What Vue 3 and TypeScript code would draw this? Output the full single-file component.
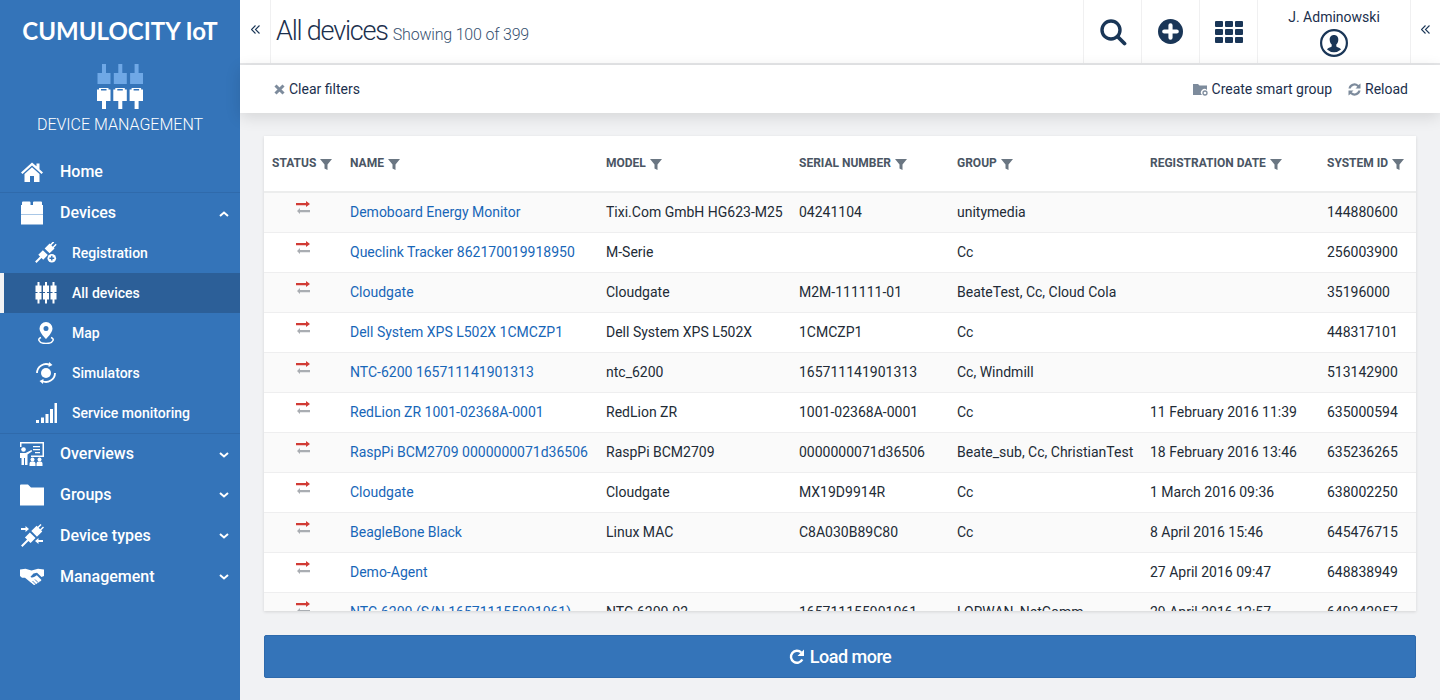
<script setup lang="ts">
interface Device {
  name: string;
  model: string;
  serial: string;
  group: string;
  date: string;
  id: string;
}

interface SubItem {
  label: string;
  icon: string;
  active?: boolean;
}

const subItems: SubItem[] = [
  { label: 'Registration', icon: 'plug' },
  { label: 'All devices', icon: 'devices', active: true },
  { label: 'Map', icon: 'pin' },
  { label: 'Simulators', icon: 'sim' },
  { label: 'Service monitoring', icon: 'bars' },
];

const bottomItems = [
  { label: 'Overviews', icon: 'overview' },
  { label: 'Groups', icon: 'folder' },
  { label: 'Device types', icon: 'types' },
  { label: 'Management', icon: 'hands' },
];

const columns = ['Status', 'Name', 'Model', 'Serial number', 'Group', 'Registration date', 'System ID'];

const devices: Device[] = [
  { name: 'Demoboard Energy Monitor', model: 'Tixi.Com GmbH HG623-M25', serial: '04241104', group: 'unitymedia', date: '', id: '144880600' },
  { name: 'Queclink Tracker 862170019918950', model: 'M-Serie', serial: '', group: 'Cc', date: '', id: '256003900' },
  { name: 'Cloudgate', model: 'Cloudgate', serial: 'M2M-111111-01', group: 'BeateTest, Cc, Cloud Cola', date: '', id: '35196000' },
  { name: 'Dell System XPS L502X 1CMCZP1', model: 'Dell System XPS L502X', serial: '1CMCZP1', group: 'Cc', date: '', id: '448317101' },
  { name: 'NTC-6200 165711141901313', model: 'ntc_6200', serial: '165711141901313', group: 'Cc, Windmill', date: '', id: '513142900' },
  { name: 'RedLion ZR 1001-02368A-0001', model: 'RedLion ZR', serial: '1001-02368A-0001', group: 'Cc', date: '11 February 2016 11:39', id: '635000594' },
  { name: 'RaspPi BCM2709 0000000071d36506', model: 'RaspPi BCM2709', serial: '0000000071d36506', group: 'Beate_sub, Cc, ChristianTest', date: '18 February 2016 13:46', id: '635236265' },
  { name: 'Cloudgate', model: 'Cloudgate', serial: 'MX19D9914R', group: 'Cc', date: '1 March 2016 09:36', id: '638002250' },
  { name: 'BeagleBone Black', model: 'Linux MAC', serial: 'C8A030B89C80', group: 'Cc', date: '8 April 2016 15:46', id: '645476715' },
  { name: 'Demo-Agent', model: '', serial: '', group: '', date: '27 April 2016 09:47', id: '648838949' },
  { name: 'NTC-6200 (S/N 165711155901061)', model: 'NTC-6200-02', serial: '165711155901061', group: 'LORWAN, NetComm', date: '29 April 2016 12:57', id: '649242957' },
];
</script>

<template>
  <div class="app">
    <aside class="sidebar">
      <div class="brand">CUMULOCITY IoT</div>
      <svg class="app-logo" width="46" height="45" viewBox="0 0 46 45">
        <g v-for="x in [0, 16.3, 32.6]" :key="x" :transform="`translate(${x} 0)`">
          <path d="M5 0h4v9h4.500v11H.5V9H5z" fill="#6fa8e6" />
          <path d="M2 24h9.500v1.500h2V37H9v8H5v-8H0V25.500h2z" fill="#fff" />
          <rect x="4" y="25" width="5.500" height="1.500" fill="#3474b9" />
        </g>
      </svg>
      <div class="app-name">DEVICE MANAGEMENT</div>

      <nav class="nav">
        <a class="nav-top">
          <svg class="nav-icon" viewBox="0 0 24 24" width="24" height="24">
            <path d="M12 2.500 1 12.500l1.500 1.600L12 5.600l9.500 8.500 1.500-1.600-3.500-3.200V3.500h-3v2.800z" fill="#fff" />
            <path d="M12 7.300 4.500 14v8H10v-6h4v6h5.500v-8z" fill="#fff" />
          </svg>
          <span>Home</span>
        </a>
        <a class="nav-top line">
          <svg class="nav-icon" viewBox="0 0 24 24" width="24" height="24">
            <path d="M2 4V1.500a1 1 0 0 1 1-1h6.500a1 1 0 0 1 1 1V4h2.500V1.500a1 1 0 0 1 1-1H21a1 1 0 0 1 1 1V4h1v19.500H1V4z" fill="#fff" />
            <rect x="1" y="13" width="22" height="1" fill="#a9c7e6" />
          </svg>
          <span>Devices</span>
          <svg class="chev" width="10" height="6" viewBox="0 0 10 6"><path d="M1 5l4-3.500L9 5" fill="none" stroke="#fff" stroke-width="2" /></svg>
        </a>
        <a v-for="item in subItems" :key="item.label" class="nav-sub" :class="{ active: item.active }">
          <svg class="sub-icon" viewBox="0 0 22 22" width="22" height="22">
            <template v-if="item.icon === 'plug'">
              <g transform="rotate(45 10 11)" fill="#fff">
                <path d="M7.500 -3h1.500v4h2v-4h1.500v4h1v7H6.500V1h1z" />
                <path d="M6.500 10.500h7v6.500H11v7H9v-7H6.500z" />
              </g>
              <circle cx="16.800" cy="16.200" r="5" fill="#3474b9" />
              <circle cx="16.800" cy="16.200" r="4.300" fill="#fff" />
              <path d="M16.800 13.800v4.800M14.400 16.200h4.800" stroke="#3474b9" stroke-width="1.400" />
            </template>
            <template v-else-if="item.icon === 'devices'">
              <g v-for="x in [0.5, 8, 15.5]" :key="x" fill="#fff">
                <rect :x="x + 2" y="0" width="2" height="21.500" />
                <rect :x="x" y="3.500" width="6" height="6.500" />
                <rect :x="x" y="11" width="6" height="6.500" />
              </g>
            </template>
            <template v-else-if="item.icon === 'pin'">
              <path d="M11 0a6.500 6.500 0 0 0-6.500 6.500C4.500 11 11 17 11 17s6.500-6 6.500-10.500A6.500 6.500 0 0 0 11 0zm0 9a2.500 2.500 0 1 1 0-5 2.500 2.500 0 0 1 0 5z" fill="#fff" />
              <path d="M6 15.500c-2 .7-2.500 2-2 3 .8 2 3.500 3 7 3s6.200-1 7-3c.5-1 0-2.300-2-3" fill="none" stroke="#fff" stroke-width="1.500" />
            </template>
            <template v-else-if="item.icon === 'sim'">
              <circle cx="11" cy="11" r="5" fill="#fff" />
              <path d="M2 11a9 9 0 0 1 13-8M20 11a9 9 0 0 1-13 8" fill="none" stroke="#fff" stroke-width="1.800" />
              <path d="M14 0l3.500 3-4 2zM8 22l-3.500-3 4-2z" fill="#fff" />
            </template>
            <template v-else>
              <rect x="1" y="18" width="3" height="3" fill="#fff" />
              <rect x="6" y="15.500" width="3" height="5.500" fill="#fff" />
              <rect x="10.500" y="12" width="3" height="9" fill="#fff" />
              <rect x="15" y="7" width="3" height="14" fill="#fff" />
              <rect x="19.500" y="1" width="2.500" height="20" fill="#fff" />
            </template>
          </svg>
          <span>{{ item.label }}</span>
        </a>
        <a v-for="(item, i) in bottomItems" :key="item.label" class="nav-top" :class="{ line: i === 0 }">
          <svg class="nav-icon" viewBox="0 0 24 24" width="24" height="24">
            <template v-if="item.icon === 'overview'">
              <path d="M0 0h24v15H11v-1.500h11.500V1.500h-21V5H0z" fill="#fff" />
              <circle cx="3.500" cy="7.500" r="2.300" fill="#fff" />
              <path d="M0 11h5.500l6-3 .7 1.300L7.500 12.500V23H5v-7H4v7H1.500v-7H0z" fill="#fff" />
              <path d="M13 4h7v1.300h-7zM13 7h7v1.300h-7zM15 10h5v1.300h-5z" fill="#fff" />
              <circle cx="12.500" cy="17.500" r="2" fill="#fff" />
              <circle cx="19.500" cy="17.500" r="2" fill="#fff" />
              <path d="M9.500 24v-2.500a2 2 0 0 1 2-2h2a2 2 0 0 1 2 2V24zM16.500 24v-2.500a2 2 0 0 1 2-2h2a2 2 0 0 1 2 2V24z" fill="#fff" />
            </template>
            <template v-else-if="item.icon === 'folder'">
              <path d="M0 2.500a1 1 0 0 1 1-1h7l3 3h13v18H0z" fill="#fff" />
            </template>
            <template v-else-if="item.icon === 'types'">
              <g transform="rotate(45 12 12)" fill="#fff">
                <path d="M9.500 -2.500h1.500v4h2v-4h1.500v4h1.500v7.500H8v-7.500h1.500z" />
                <path d="M8 11h8v7h-3v8.500h-2V18H8z" />
              </g>
              <path d="M1 4h4.500V2l3.500 3-3.500 3V6H1zM23 18h-4.500v2L15 17l3.500-3v2H23z" fill="#fff" />
            </template>
            <template v-else>
              <path d="M0 4.500l5.500-.7 6 1.700 6.500-1.700 6 .7v6.500l-2.500 1-4.500-4.300-3.500.8-3 3.200c1 1.200 2.500 1 4 0l2.300-1.500 4.700 4.800-1 1.200-1 .2-.5 1-1.500.3-.5 1-1.500.2-.7 1-1.300-.2L5 12.800H2L0 11z" fill="#fff" />
              <path d="M15 14.500l3 3M12.500 16l3 3M10.500 18l2 2" stroke="#3474b9" stroke-width=".9" />
            </template>
          </svg>
          <span>{{ item.label }}</span>
          <svg class="chev" width="10" height="6" viewBox="0 0 10 6"><path d="M1 1l4 3.500L9 1" fill="none" stroke="#fff" stroke-width="2" /></svg>
        </a>
      </nav>
    </aside>

    <main class="main">
      <header class="topbar">
        <button class="collapse" aria-label="Collapse menu">
          <svg width="9" height="9" viewBox="0 0 9 9"><path d="M4.500 .5l-4 4 4 4M8.500 .5l-4 4 4 4" fill="none" stroke="#1a3657" stroke-width="1.100" /></svg>
        </button>
        <div class="title">
          <h1>All devices</h1>
          <small>Showing 100 of 399</small>
        </div>
        <div class="top-btn">
          <svg width="28" height="28" viewBox="0 0 28 28"><circle cx="12" cy="12" r="9" fill="none" stroke="#1a3657" stroke-width="3.400" /><path d="M18.500 18.500l7 7" stroke="#1a3657" stroke-width="3.800" stroke-linecap="round" /></svg>
        </div>
        <div class="top-btn">
          <svg width="25" height="25" viewBox="0 0 24 24"><circle cx="12" cy="12" r="12" fill="#1a3657" /><path d="M12 6v12M6 12h12" stroke="#fff" stroke-width="4" stroke-linecap="round" /></svg>
        </div>
        <div class="top-btn">
          <div class="apps"><span v-for="n in 9" :key="n"></span></div>
        </div>
        <div class="user">
          <span>J. Adminowski</span>
          <svg width="28" height="28" viewBox="0 0 28 28">
            <circle cx="14" cy="14" r="12.900" fill="none" stroke="#1a3657" stroke-width="2.200" />
            <path d="M14 6c-3 0-4.500 2.300-4.300 5 .1 2 1 3.500 2 4.500v2c-1.500 1-4 1.300-4.700 3a10.500 10.500 0 0 0 14 0c-.7-1.700-3.200-2-4.700-3v-2c1-1 1.900-2.500 2-4.500.2-2.700-1.300-5-4.300-5z" fill="#1a3657" />
          </svg>
        </div>
        <button class="collapse right" aria-label="Collapse panel">
          <svg width="9" height="9" viewBox="0 0 9 9"><path d="M4.500 .5l-4 4 4 4M8.500 .5l-4 4 4 4" fill="none" stroke="#1a3657" stroke-width="1.100" /></svg>
        </button>
      </header>

      <div class="actions">
        <a class="act left">
          <svg width="11" height="11" viewBox="0 0 11 11"><path d="M1.500 1.500l8 8M9.500 1.500l-8 8" stroke="#7d8b9c" stroke-width="3" /></svg>
          Clear filters
        </a>
        <a class="act">
          <svg width="15" height="13" viewBox="0 0 15 13"><path d="M0 1h5l1.500 1.500H14V7a3.500 3.500 0 0 0-5 5H0z" fill="#7d8b9c" /><circle cx="12" cy="10" r="2" fill="none" stroke="#7d8b9c" stroke-width="1.300" /></svg>
          Create smart group
        </a>
        <a class="act">
          <svg width="13" height="13" viewBox="0 0 13 13"><path d="M.5 5.500A6 6 0 0 1 10.500 2L12.500.5v5h-5l1.800-1.800A4 4 0 0 0 2.700 5.500zM12.500 7.500A6 6 0 0 1 2.500 11L.5 12.500v-5h5L3.700 9.300a4 4 0 0 0 6.600-1.800z" fill="#7d8b9c" /></svg>
          Reload
        </a>
      </div>

      <section class="content">
        <div class="card">
          <table>
            <colgroup>
              <col style="width: 78px" />
              <col style="width: 256px" />
              <col style="width: 193px" />
              <col style="width: 158px" />
              <col style="width: 193px" />
              <col style="width: 177px" />
              <col style="width: 97px" />
            </colgroup>
            <thead>
              <tr>
                <th v-for="c in columns" :key="c">
                  {{ c }}
                  <svg class="filter" width="12" height="12" viewBox="0 0 12 12"><path d="M0 1h12L7.500 6.500V12l-3-1.500v-4z" fill="#6a7682" /></svg>
                </th>
              </tr>
            </thead>
            <tbody>
              <tr v-for="(d, i) in devices" :key="i">
                <td class="status">
                  <svg class="status-icon" width="14" height="14" viewBox="0 0 14 14">
                    <path d="M0 2h10V0l4 3-4 3V4.300H0z" fill="#d13b35" />
                    <path d="M14 9H4V7l-3 3 3 3v-1.800h10z" fill="#a9adb2" />
                  </svg>
                </td>
                <td><a class="link">{{ d.name }}</a></td>
                <td>{{ d.model }}</td>
                <td>{{ d.serial }}</td>
                <td>{{ d.group }}</td>
                <td>{{ d.date }}</td>
                <td>{{ d.id }}</td>
              </tr>
            </tbody>
          </table>
        </div>
        <button class="load">
          <svg width="16" height="16" viewBox="0 0 16 16"><path d="M13.300 10.500A6 6 0 1 1 12.200 3.500" fill="none" stroke="#fff" stroke-width="2.400" /><path d="M15 0.500V7H8.500z" fill="#fff" /></svg>
          Load more
        </button>
      </section>
    </main>
  </div>
</template>

<style scoped>
.app {
  display: flex;
  height: 700px;
  overflow: hidden;
  font-family: Roboto, "Liberation Sans", sans-serif;
  font-size: 14px;
  color: #1b2a3f;
}

.sidebar {
  width: 240px;
  flex: none;
  background: #3474b9;
  color: #fff;
  display: flex;
  flex-direction: column;
  align-items: center;
}

.brand {
  margin-top: 15px;
  font-family: Lato, sans-serif;
  font-weight: 700;
  font-size: 24px;
  line-height: 31px;
}

.app-logo {
  margin-top: 18px;
}

.app-name {
  margin-top: 4px;
  font-size: 16px;
  line-height: 24px;
  font-weight: 300;
}

.nav {
  align-self: stretch;
  margin-top: 14px;
  display: flex;
  flex-direction: column;
}

.nav-top {
  height: 41px;
  box-sizing: border-box;
  display: flex;
  align-items: center;
  padding-left: 20px;
  font-size: 16px;
  font-weight: 500;
  position: relative;
}

.nav-top span {
  margin-left: 16px;
}

.nav-top.line {
  border-top: 1px solid #2f6aab;
  padding-bottom: 1px;
}

.nav-icon {
  flex: none;
}

.chev {
  position: absolute;
  right: 11px;
  top: 18px;
}

.nav-sub {
  height: 40px;
  display: flex;
  align-items: center;
  padding-left: 35px;
  font-weight: 500;
  font-size: 14px;
  box-sizing: border-box;
}

.nav-sub span {
  margin-left: 15px;
}

.nav-sub.active {
  background: #2c5f98;
  border-left: 4px solid #f2f3f5;
  padding-left: 31px;
}

.main {
  flex: 1;
  min-width: 0;
  display: flex;
  flex-direction: column;
  background: #f1f2f4;
}

.topbar {
  height: 65px;
  flex: none;
  box-sizing: border-box;
  background: #fff;
  border-bottom: 2px solid #e6e7e9;
  display: flex;
  align-items: stretch;
}

.collapse {
  width: 31px;
  flex: none;
  box-sizing: border-box;
  padding: 0 0 4px;
  border: none;
  border-right: 1px solid #f0f0f1;
  background: none;
}

.collapse.right {
  width: 30px;
  border-right: none;
  border-left: 1px solid #f0f0f1;
}

.title {
  flex: 1;
  display: flex;
  align-items: flex-start;
  padding-left: 5px;
  color: #1b2f4d;
}

h1 {
  margin: 13px 0 0;
  font-size: 27px;
  line-height: 36px;
  font-weight: 300;
  letter-spacing: -1.2px;
}

small {
  margin: 25px 0 0 5px;
  font-size: 16px;
  font-weight: 300;
  letter-spacing: -0.2px;
  color: #35506f;
}

.top-btn {
  width: 58px;
  flex: none;
  box-sizing: border-box;
  border-left: 1px solid #f0f0f1;
  display: flex;
  align-items: center;
  justify-content: center;
}

.apps {
  display: grid;
  grid-template-columns: repeat(3, 8px);
  grid-auto-rows: 6px;
  gap: 2px;
}

.apps span {
  background: #1a3657;
  border-radius: 1px;
}

.user {
  width: 153px;
  flex: none;
  box-sizing: border-box;
  border-left: 1px solid #f0f0f1;
  display: flex;
  flex-direction: column;
  align-items: center;
  padding-top: 9px;
  gap: 4px;
  font-size: 14px;
  line-height: 16px;
  color: #1b2f4d;
}

.actions {
  height: 48px;
  flex: none;
  background: #fff;
  box-shadow: 0 4px 16px rgba(0, 0, 0, 0.12);
  display: flex;
  align-items: center;
  gap: 16px;
  padding: 0 32px 0 34px;
  position: relative;
}

.act {
  display: flex;
  align-items: center;
  gap: 4px;
  color: #1b2f4d;
}

.act.left {
  margin-right: auto;
}

.content {
  flex: 1;
  min-height: 0;
  display: flex;
  flex-direction: column;
  padding: 23px 24px 22px;
}

.card {
  flex: 1;
  min-height: 0;
  overflow: hidden;
  background: #fff;
  box-shadow: 0 1px 3px rgba(0, 0, 0, 0.12);
}

table {
  width: 1152px;
  table-layout: fixed;
  border-collapse: collapse;
}

th {
  height: 56px;
  padding: 0 0 1px 8px;
  box-sizing: border-box;
  text-align: left;
  font-size: 12px;
  font-weight: 700;
  text-transform: uppercase;
  color: #4a5563;
  border-bottom: 2px solid #eceded;
  white-space: nowrap;
}

.filter {
  margin-left: 1px;
  vertical-align: -3px;
}

td {
  height: 40px;
  padding: 0 0 0 8px;
  box-sizing: border-box;
  border-bottom: 1px solid #eeeeef;
  color: #222b36;
  white-space: nowrap;
  overflow: hidden;
}

tbody tr:nth-child(odd) {
  background: #fafafa;
}

.status {
  padding-left: 32px;
  padding-bottom: 8px;
}

.status-icon {
  display: block;
}

.link {
  color: #1766b8;
}

.load {
  flex: none;
  margin-top: 24px;
  height: 43px;
  box-sizing: border-box;
  border: 1px solid #2e6aac;
  border-radius: 2px;
  background: #3474b9;
  color: #fff;
  font-family: Roboto, sans-serif;
  font-size: 18px;
  font-weight: 500;
  letter-spacing: -0.5px;
  display: flex;
  align-items: center;
  justify-content: center;
  gap: 5px;
}
</style>

<style>
html,
body {
  overflow: hidden;
}
</style>
